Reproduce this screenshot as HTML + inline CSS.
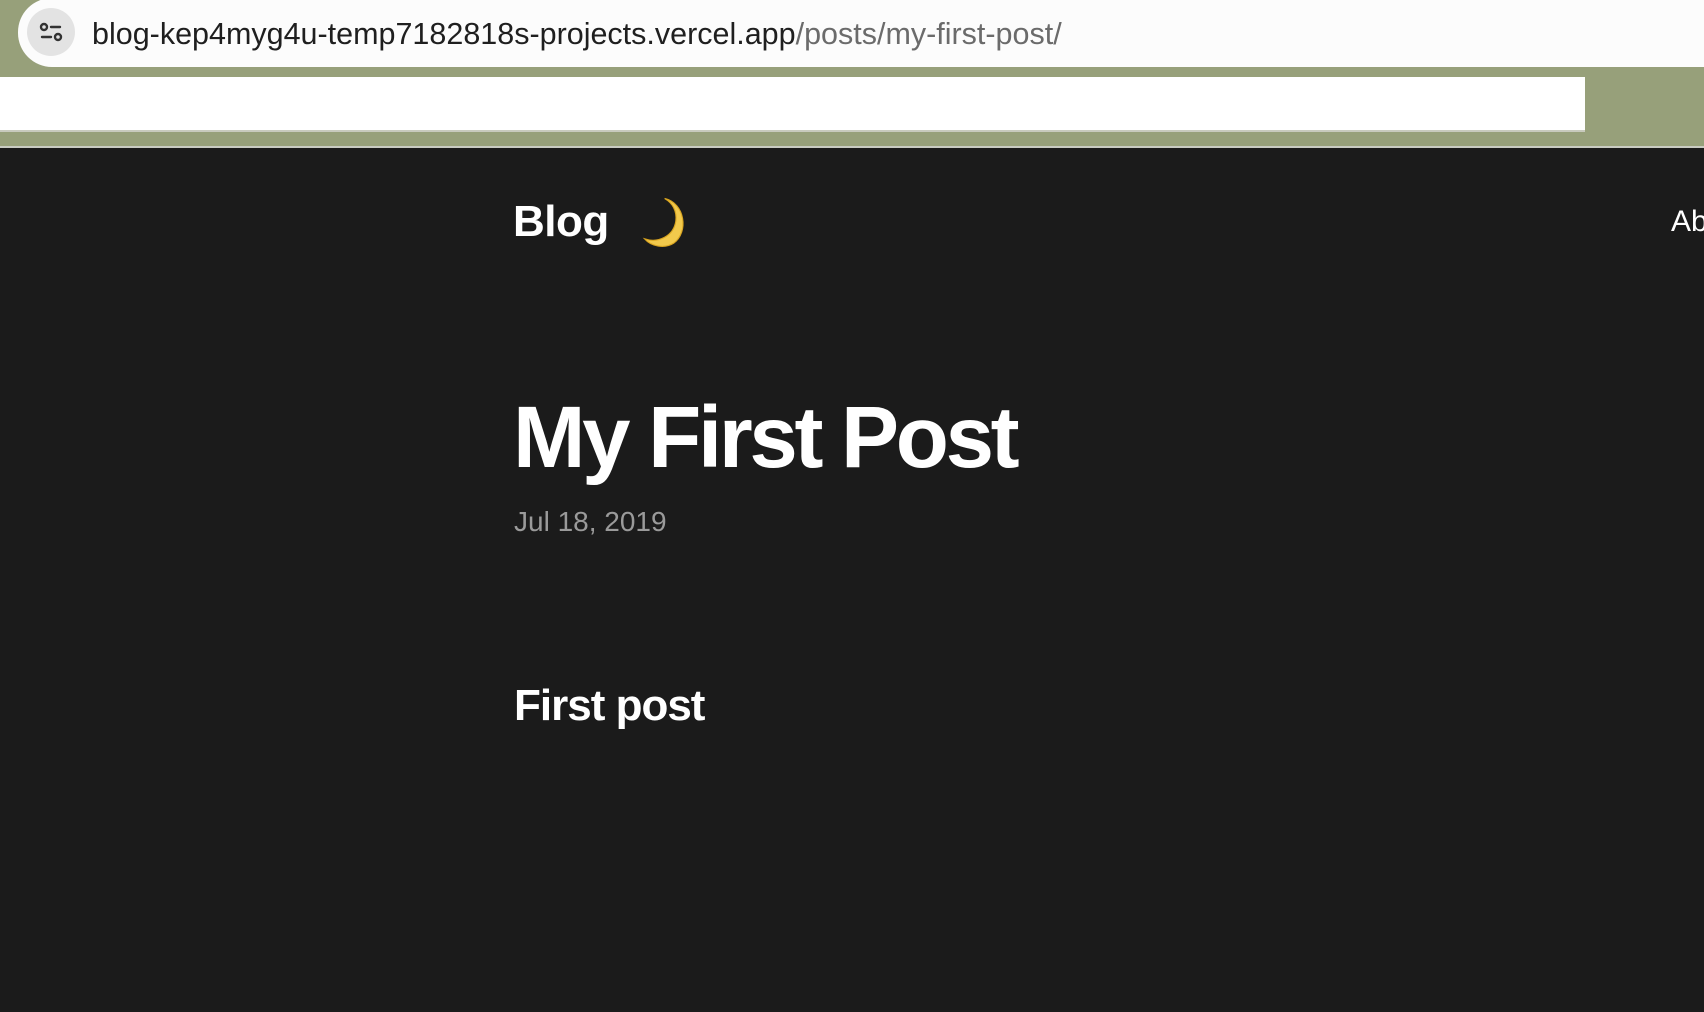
<!DOCTYPE html>
<html><head><meta charset="utf-8"><style>
*{margin:0;padding:0;box-sizing:border-box}
body{width:1704px;height:1012px;overflow:hidden;background:#1b1b1b;font-family:"Liberation Sans",sans-serif;position:relative}
.top{position:absolute;left:0;top:0;width:1704px;height:148px;background:#97a07a;border-bottom:2px solid #c9cbc2}
.url{position:absolute;left:18px;top:-2px;width:1720px;height:69px;background:#fcfcfc;border-radius:34px}
.ic{position:absolute;left:9px;top:10px;width:48px;height:48px;border-radius:50%;background:#e3e3e3}
.ut{position:absolute;left:74px;top:19px;font-size:30.5px;color:#1f1f1f;white-space:nowrap}
.ut span{color:#6b6b6b}
.bar{position:absolute;left:0;top:77px;width:1585px;height:55px;background:#fff;border-bottom:2px solid #c8cabd}
.t{position:absolute;color:#fff;white-space:nowrap;font-weight:bold}
</style></head><body>
<div class="top"><div class="url"><div class="ic"><svg width="48" height="48" viewBox="0 0 48 48" fill="none" stroke="#333" stroke-width="2.4" stroke-linecap="round"><circle cx="17" cy="19" r="3"/><line x1="24" y1="19" x2="33" y2="19"/><line x1="15" y1="29" x2="24" y2="29"/><circle cx="31" cy="29" r="3"/></svg></div>
<div class="ut">blog-kep4myg4u-temp7182818s-projects.vercel.app<span>/posts/my-first-post/</span></div></div>
<div class="bar"></div></div>
<div class="t" style="left:513px;top:194px;font-size:44px;line-height:56px;letter-spacing:-0.5px">Blog</div>
<div style="position:absolute;left:640px;top:194px;width:56px;height:56px">
<svg width="56" height="56" viewBox="0 0 50 50"><path d="M22 4 C40 8 44 34 30 44 C22 49 10 47 4 40 C16 44 30 38 32 24 C33 15 29 8 22 4Z" fill="#f2c94c" stroke="#d9a520" stroke-width="1"/></svg></div>
<div class="t" style="left:1671px;top:205px;font-size:30px;font-weight:normal">Ab</div>
<div class="t" style="left:513px;top:388px;font-size:87px;line-height:100px;letter-spacing:-3.3px">My First Post</div>
<div class="t" style="left:514px;top:506px;font-size:28px;font-weight:normal;color:#9a9a9a">Jul 18, 2019</div>
<div class="t" style="left:514px;top:680px;font-size:44px;line-height:52px;letter-spacing:-1px">First post</div>
</body></html>
